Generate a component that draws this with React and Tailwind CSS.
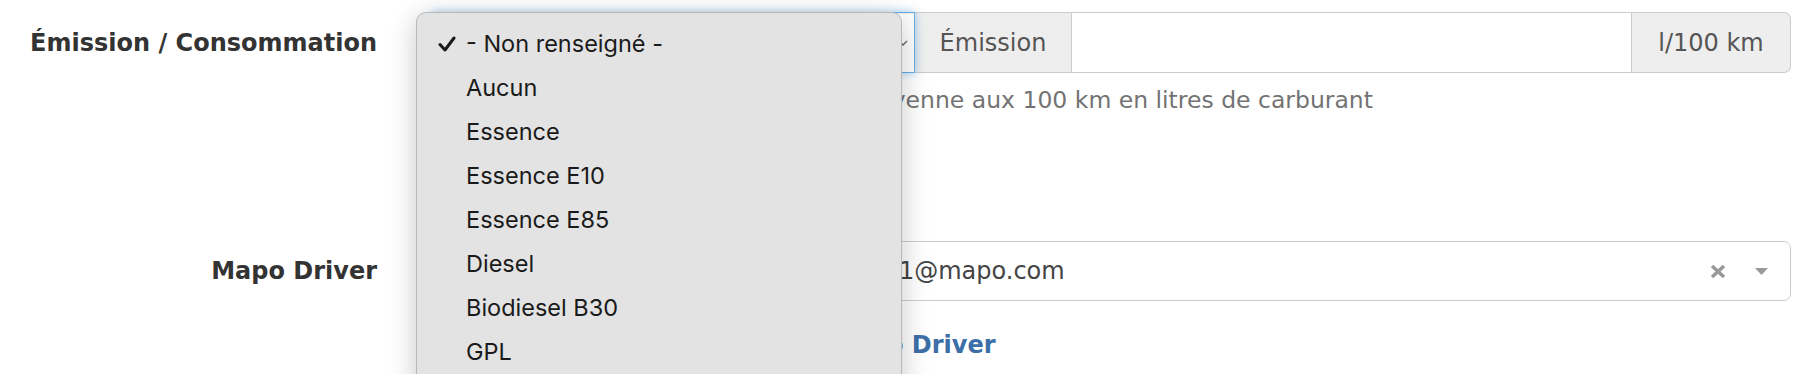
import React from "react";

const fuels = [
  "- Non renseigné -",
  "Aucun",
  "Essence",
  "Essence E10",
  "Essence E85",
  "Diesel",
  "Biodiesel B30",
  "GPL",
  "GNV",
];

function Check() {
  return (
    <svg width="18" height="16" viewBox="0 0 18 16" className="shrink-0">
      <path d="M2 8.5 L7 14 L16 2" fill="none" stroke="#1a1a1a" strokeWidth="3" strokeLinecap="round" strokeLinejoin="round" />
    </svg>
  );
}

export default function App() {
  return (
    <div className="relative w-[1806px] h-[374px] overflow-hidden bg-white font-['DejaVu_Sans',Verdana,sans-serif] text-[24px] text-[#333]">
      <div className="pt-[12px]">
        {/* Émission / Consommation */}
        <div className="flex">
          <label className="w-[377px] h-[61px] flex items-center justify-end font-bold text-[#333] whitespace-nowrap">
            Émission / Consommation
          </label>
          <div className="ml-[53px] w-[1361px]">
            <div className="flex h-[61px]">
              <div className="relative z-10 w-[485px] border border-[#66afe9] rounded-l-[7px] bg-white shadow-[inset_0_1px_1px_rgba(0,0,0,0.075),0_0_8px_rgba(102,175,233,0.6)] flex items-center justify-end pr-[6px]">
                <svg width="10" height="8" viewBox="0 0 10 8">
                  <path d="M1 2 L5 6 L9 2" fill="none" stroke="#666" strokeWidth="1.4" />
                </svg>
              </div>
              <div className="w-[156px] bg-[#eee] border-y border-[#ccc] flex items-center justify-center text-[#555]">
                Émission
              </div>
              <div className="w-[561px] border border-[#ccc] bg-white" />
              <div className="w-[159px] bg-[#eee] border-y border-r border-[#ccc] rounded-r-[7px] flex items-center justify-center text-[#555]">
                l/100 km
              </div>
            </div>
            <p className="mt-[10px] leading-[35px] text-[#737373] text-[23.5px] whitespace-nowrap">
              Émission de CO2 ou consommation moyenne aux 100 km en litres de carburant
            </p>
          </div>
        </div>

        {/* Mapo Driver */}
        <div className="flex mt-[123px]">
          <label className="w-[377px] h-[60px] flex items-center justify-end font-bold text-[#333] whitespace-nowrap">
            Mapo Driver
          </label>
          <div className="ml-[53px] w-[1361px]">
            <div className="h-[60px] border border-[#ccc] rounded-[7px] bg-white flex items-center pl-[21px] pr-[22px]">
              <span className="flex-1 text-[#444] whitespace-nowrap overflow-hidden">
                Jean-Pierre Durand - chauffeur_driver1@mapo.com
              </span>
              <svg width="16" height="15" viewBox="0 0 16 15" className="mr-[29px]">
                <path d="M2 2 L14 13 M14 2 L2 13" stroke="#999" strokeWidth="3.6" />
              </svg>
              <svg width="13" height="7" viewBox="0 0 13 7">
                <path d="M0 0 L13 0 L6.5 7 Z" fill="#999" />
              </svg>
            </div>
            <a className="block mt-[27px] leading-[35px] font-bold text-[#3c6ea8] whitespace-nowrap">
              Créer un nouveau compte de Mapo Driver
            </a>
          </div>
        </div>
      </div>

      {/* native select popup */}
      <div className="absolute z-20 left-[416px] top-[12px] w-[486px] h-[420px] bg-[#e3e3e3] border border-[#b8b8b8] rounded-[10px] shadow-[0_6px_28px_rgba(0,0,0,0.22)] pt-[9px] font-['Inter',sans-serif] text-[23.5px] text-[#1a1a1a]">
        {fuels.map((f, i) => (
          <div key={f} className="h-[44px] flex items-center">
            <div className="w-[49px] flex justify-end pr-[10px]">{i === 0 && <Check />}</div>
            <span>{f}</span>
          </div>
        ))}
      </div>
    </div>
  );
}
